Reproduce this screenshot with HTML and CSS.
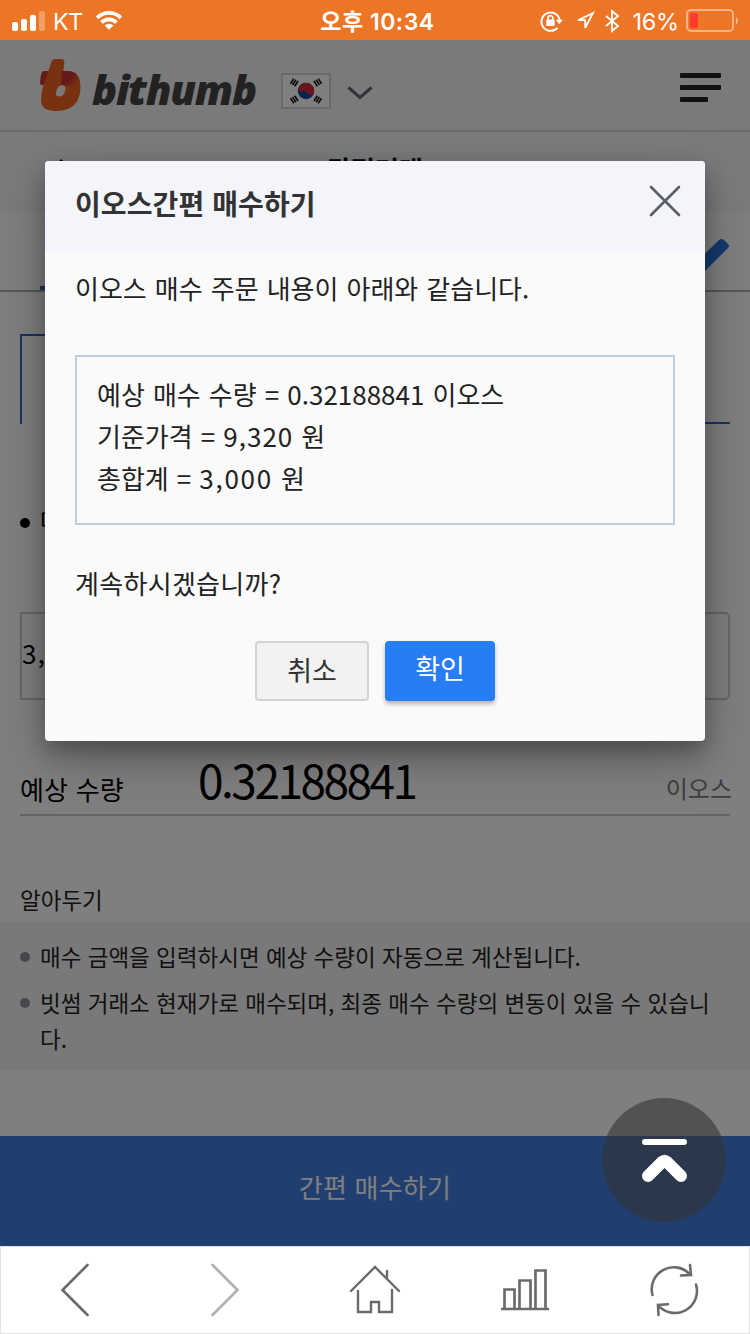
FILE: index.html
```html
<!DOCTYPE html>
<html lang="ko">
<head>
<meta charset="utf-8">
<title>bithumb</title>
<link rel="stylesheet" href="styles.css">
</head>
<body>
<div class="phone">
  <header class="status">
    <div class="status-side">
      <svg class="signal" width="34" height="20" viewBox="0 0 34 20" fill="#fff"><rect x="0" y="11" width="6" height="9" rx="2"/><rect x="9" y="8" width="6" height="12" rx="2"/><rect x="18" y="4" width="6" height="16" rx="2"/><rect x="27" y="0" width="6" height="20" rx="2" opacity=".3"/></svg>
      <span class="carrier">KT</span>
      <svg class="wifi" width="28" height="21" viewBox="0 0 30 22"><g fill="none" stroke="#fff" stroke-width="4"><path d="M2.200 8.200a18 18 0 0 1 25.600 0"/><path d="M7 13.200a11.300 11.300 0 0 1 16 0"/></g><path d="M15 21l-4.700-4.600a6.700 6.700 0 0 1 9.400 0z" fill="#fff"/></svg>
    </div>
    <span class="clock">오후 10:34</span>
    <div class="status-side status-right">
      <svg width="24" height="22" viewBox="0 0 24 22"><path d="M17.500 17.800A9.200 9.200 0 1 1 19.700 10" fill="none" stroke="#fff" stroke-width="2"/><path d="M15.800 9.800h7l-3.500 4.500z" fill="#fff"/><rect x="6.200" y="9.500" width="8.400" height="6.500" rx="1" fill="#fff"/><path d="M8 10V8a2.400 2.400 0 0 1 4.800 0v2" fill="none" stroke="#fff" stroke-width="1.600"/></svg>
      <svg class="locate" width="20" height="20" viewBox="0 0 20 20"><path d="M18 2L3 9.200h7.200V17z" fill="none" stroke="#fff" stroke-width="1.800"/></svg>
      <svg class="bt" width="16" height="24" viewBox="0 0 16 24"><path d="M2 7l12 10-6 5V2l6 5L2 17" fill="none" stroke="#fff" stroke-width="1.900"/></svg>
      <span class="percent">16%</span>
      <svg width="54" height="24" viewBox="0 0 54 24"><rect x="1" y="1" width="46" height="21" rx="4" fill="none" stroke="#fff" stroke-opacity=".45" stroke-width="2"/><rect x="4" y="4" width="8" height="15" rx="1.500" fill="#ff3b30"/><path d="M50 8q4 3.500 0 8z" fill="#fff" opacity=".5"/></svg>
    </div>
  </header>

  <main class="page">
    <div class="topbar">
      <svg class="logo-mark" width="41" height="54" viewBox="0 0 41 54">
        <defs><linearGradient id="b1" x1="0" y1="0" x2="1" y2=".6"><stop offset="0" stop-color="#d8322f"/><stop offset=".55" stop-color="#c93632"/><stop offset="1" stop-color="#f26522"/></linearGradient></defs>
        <path d="M4 13H27Q40 13 40 27L38 34 20 27H1Q-.5 26 .3 22Q1 13 4 13z" fill="url(#b1)"/>
        <path d="M11 5Q12 1 15 1H21Q25 1 24.300 6L21 27L31 22L40.500 27Q41 53 16 53Q1 53 1 42Q1 37 3 29z" fill="#f26522"/>
        <path d="M21 27L22 13H27Q40 13 40.300 29z" fill="url(#b1)"/>
        <path d="M20.500 27.500Q25.500 26.500 25.500 31Q24.500 38.500 19 38.500Q15.500 38.500 16 35Q16.500 29 20.500 27.500z" fill="#f4f4f4"/>
      </svg>
      <span class="brand">bithumb</span>
      <svg class="flag" width="50" height="36" viewBox="0 0 50 36"><rect x="1" y="1" width="48" height="34" fill="#fff" stroke="#d5d5d9" stroke-width="2"/>
        <circle cx="25" cy="18" r="8.200" fill="#12479f"/><path d="M17.800 14A8.200 8.200 0 0 1 32.600 21Q29 24 26 20T20.500 19Q17 18.500 17.800 14z" fill="#d52b3a"/>
        <g stroke="#111" stroke-width="1.600"><path d="M9.500 10.800l3.300-5.200M11.600 12l3.300-5.200M13.700 13.200l3.300-5.200M40.500 10.800l-3.300-5.200M38.400 12l-3.300-5.200M36.300 13.200l-3.300-5.200M9.500 25.200l3.300 5.200M11.600 24l3.300 5.200M13.700 22.800l3.300 5.200M40.500 25.200l-3.300 5.200M38.400 24l-3.300 5.200M36.300 22.800l-3.300 5.200"/></g></svg>
      <svg class="drop" width="26" height="14" viewBox="0 0 26 14"><path d="M1.500 1.500L13 11.500l11.500-10" fill="none" stroke="#656774" stroke-width="3"/></svg>
      <svg class="menu" width="41" height="30" viewBox="0 0 41 30" fill="#222"><rect y="0" width="41" height="5" rx="1"/><rect y="12" width="41" height="5" rx="1"/><rect y="24" width="28" height="5" rx="1"/></svg>
    </div>
    <div class="subhead">
      <svg class="back" width="20" height="28" viewBox="0 0 20 28"><path d="M14 2L5 14l9 12" fill="none" stroke="#000" stroke-width="3"/></svg>
      <h1 class="subtitle">간편거래</h1>
    </div>
    <div class="tabs"><span class="tab-line"></span>
      <svg class="pencil" width="52" height="52" viewBox="0 0 52 52"><path d="M4 38L41 2Q43.500 0 46 2L50 6Q52 8 50 10L13 47L2 50z" fill="#2a74dc"/></svg>
    </div>
    <div class="modes"><div class="mode mode-on"></div><div class="mode"></div></div>
    <div class="field-label"><i class="dot dot-dark"></i><span>매수금액</span></div>
    <div class="amount">3,000</div>
    <div class="estimate"><span class="est-label">예상 수량</span><span class="est-value">0.32188841</span><span class="est-unit">이오스</span></div>
    <h2 class="note-title">알아두기</h2>
    <ul class="notes">
      <li><i class="dot"></i><span>매수 금액을 입력하시면 예상 수량이 자동으로 계산됩니다.</span></li>
      <li><i class="dot"></i><span>빗썸 거래소 현재가로 매수되며, 최종 매수 수량의 변동이 있을 수 있습니<br>다.</span></li>
    </ul>
    <div class="buy">간편 매수하기</div>
    <div class="shade"></div>
    <section class="dialog">
      <div class="dialog-head"><h3 class="dialog-title">이오스간편 매수하기</h3>
        <svg width="32" height="32" viewBox="0 0 32 32"><path d="M2 2l28 28M30 2L2 30" stroke="#5b5d68" stroke-width="2.600" stroke-linecap="round"/></svg>
      </div>
      <div class="dialog-body">
        <p class="line">이오스 매수 주문 내용이 아래와 같습니다.</p>
        <div class="summary">
          <p>예상 매수 수량 = 0.32188841 이오스</p>
          <p>기준가격 = <span class="price">9,320</span> 원</p>
          <p>총합계 = <span class="total">3,000</span> 원</p>
        </div>
        <p class="line ask">계속하시겠습니까?</p>
        <div class="actions"><button class="btn cancel">취소</button><button class="btn ok">확인</button></div>
      </div>
    </section>
    <div class="totop"><svg width="48" height="46" viewBox="0 0 48 46"><rect x="1" y="1" width="45" height="6" rx="3" fill="#fff"/><path d="M7 38L21 24q2.500-2 5 0L40 38" fill="none" stroke="#fff" stroke-width="12" stroke-linecap="round" stroke-linejoin="round"/></svg></div>
  </main>

  <nav class="nav">
    <svg class="prev" width="50" height="56" viewBox="0 0 50 56"><path d="M37.500 3L12.500 28l25 25" fill="none" stroke="#6b6b6b" stroke-width="2.600" stroke-linecap="round"/></svg>
    <svg width="50" height="56" viewBox="0 0 50 56"><path d="M12.500 3l25 25-25 25" fill="none" stroke="#b0b0b0" stroke-width="2.600" stroke-linecap="round"/></svg>
    <svg width="52" height="56" viewBox="0 0 52 56"><path d="M2 29L26 5l24 24M9 29v21h13V40h8v10h13V28M38 17V9" fill="none" stroke="#6b6b6b" stroke-width="2.400" stroke-linecap="round"/></svg>
    <svg width="50" height="56" viewBox="0 0 50 56"><path d="M1 47h48M4.500 47V27.500h10V47M19.500 47V18.500h11V47M35.500 47V8.500h10V47" fill="none" stroke="#6b6b6b" stroke-width="2.700"/></svg>
    <svg width="52" height="56" viewBox="0 0 52 56"><path d="M4.500 33A22 22 0 0 1 42.500 13M42 3l1 10-10 .5M48 22.500A22 22 0 0 1 10 43M10.500 53L10 43l10-.7" fill="none" stroke="#6b6b6b" stroke-width="2.600" stroke-linecap="round"/></svg>
  </nav>
</div>
</body>
</html>
```
FILE: styles.css
```css
* { box-sizing: border-box; }
body, h1, h2, h3, p, ul { margin: 0; padding: 0; }
body { font-family: "Noto Sans CJK KR", sans-serif; color: #222; background: #fff; }
svg { display: block; flex: none; }
.phone { width: 750px; height: 1334px; display: flex; flex-direction: column; overflow: hidden; }

.status { height: 40px; flex: none; background: #ed7526; color: #fff; display: grid; grid-template-columns: 1fr auto 1fr; align-items: center; padding: 0 10px 0 12px; }
.status-side { display: flex; align-items: center; }
.status-right { justify-content: flex-end; }
.carrier { font: 23.500px/40px Inter, sans-serif; margin: 2px 13px 0 7px; letter-spacing: -.8px; }
.wifi { margin-top: -1px; }
.clock { font: 600 23px/40px Inter, "Noto Sans CJK KR", sans-serif; letter-spacing: .5px; padding: 1px 0 0 3px; }
.locate { margin-left: 11px; }
.bt { margin: 0 12px 0 9px; }
.percent { font: 23.500px/40px Inter, sans-serif; margin: 1px 7px 0 0; letter-spacing: -.2px; }

.page { position: relative; height: 1206px; flex: none; background: #fff; }
.topbar { height: 92px; background: #f4f4f4; border-bottom: 2px solid #d6d8dd; display: flex; align-items: center; padding: 0 29px 0 40px; }
.brand { font: italic 800 41.500px/60px "Open Sans", sans-serif; color: #444; margin: 7px 0 0 11px; width: 166px; letter-spacing: -1.300px; }
.flag { margin: 11px 0 0 23px; }
.drop { margin: 15px 0 0 16px; }
.menu { margin: 5px 0 0 auto; }
.subhead { height: 80px; background: #f4f6fa; display: flex; align-items: center; }
.back { margin-left: 48px; }
.subtitle { flex: 1; text-align: center; padding-right: 68px; font-size: 26px; line-height: 74px; height: 80px; font-weight: 700; color: #000; }
.tabs { height: 80px; border-bottom: 2px solid #adacb6; display: flex; align-items: flex-end; justify-content: space-between; padding: 0 20px 0 40px; }
.tab-line { width: 160px; height: 4px; background: #286dd4; }
.pencil { align-self: flex-start; margin-top: 26px; }
.modes { display: flex; margin: 42px 20px 0; height: 90px; }
.mode { flex: 1; border-bottom: 2px solid #3265cc; }
.mode-on { border: 2px solid #3265cc; border-bottom: 0; }
.dot { width: 10px; height: 10px; border-radius: 50%; background: #8d8d98; flex: none; }
.dot-dark { background: #000; margin-top: 5px; }
.field-label { display: flex; align-items: center; gap: 10px; height: 40px; margin: 76px 20px 0; font-size: 24px; line-height: 40px; color: #000; }
.amount { height: 88px; margin: 72px 20px 0; border: 2px solid #c4ced6; border-right-color: #ccc; border-radius: 0 5px 5px 0; line-height: 78px; font-size: 26px; color: #000; letter-spacing: 1.400px; }
.estimate { height: 76px; margin: 40px 20px 0; border-bottom: 2px solid #c1ccd5; display: flex; align-items: flex-end; white-space: nowrap; color: #000; }
.est-label { width: 178px; font-size: 26px; line-height: 51px; letter-spacing: .2px; }
.est-value { flex: 1; font-size: 46px; line-height: 70px; letter-spacing: -2.500px; }
.est-unit { font-size: 24px; line-height: 52px; color: #777d85; margin-right: -2px; }
.note-title { margin: 66px 20px 0; font-size: 22.500px; line-height: 34px; height: 40px; font-weight: 400; }
.notes { height: 148px; background: #f2f2f2; padding: 16px 20px 0; list-style: none; }
.notes li { display: flex; gap: 10px; font-size: 22.500px; line-height: 36px; margin-bottom: 10px; white-space: nowrap; }
.notes .dot { margin-top: 14px; }
.buy { margin-top: 66px; height: 110px; background: #407ee0; color: #fff; text-align: center; font-size: 26px; line-height: 102px; letter-spacing: .2px; }
.shade { position: absolute; inset: 0; background: rgba(0, 0, 0, .5); }

.dialog { position: absolute; left: 45px; top: 121px; width: 660px; height: 580px; background: #fafafa; border-radius: 4px; overflow: hidden; box-shadow: 0 10px 20px rgba(0,0,0,.25), 0 18px 50px rgba(0,0,0,.25); }
.dialog-head { height: 90px; background: #f4f5fb; display: flex; justify-content: space-between; align-items: flex-start; padding: 24px 24px 0 30px; }
.dialog-title { font-size: 28px; line-height: 36px; font-weight: 700; color: #333; letter-spacing: .1px; }
.dialog-body { padding: 16px 30px 0; font-size: 26px; word-spacing: .8px; }
.line { line-height: 42px; white-space: nowrap; }
.ask { letter-spacing: .3px; }
.summary { margin: 46px 0 37px; height: 170px; border: 2px solid #c1cdd8; padding: 16px 20px; line-height: 42px; }
.price { letter-spacing: 1px; }
.total { letter-spacing: 1.700px; }
.actions { display: flex; justify-content: center; gap: 16px; margin-top: 37px; }
.btn { height: 60px; font: 27px/54px "Noto Sans CJK KR", sans-serif; border-radius: 4px; padding: 0; }
.cancel { width: 114px; border: 2px solid #d2d2d6; background: #f2f2f2; color: #333; padding-bottom: 2px; }
.ok { width: 110px; border: 0; background: #277df6; color: #fff; padding-bottom: 6px; box-shadow: 0 3px 4px rgba(0,0,0,.28); }
.totop { position: absolute; left: 602px; top: 1058px; width: 124px; height: 124px; border-radius: 50%; background: rgba(51,51,51,.6); display: grid; place-items: center; padding: 2px 0 0 2px; }

.nav { height: 88px; flex: none; background: #fff; border: 1px solid #e2e2e2; display: grid; grid-template-columns: repeat(5, 1fr); justify-items: center; align-items: center; }
.prev { margin-right: 2px; }
```
